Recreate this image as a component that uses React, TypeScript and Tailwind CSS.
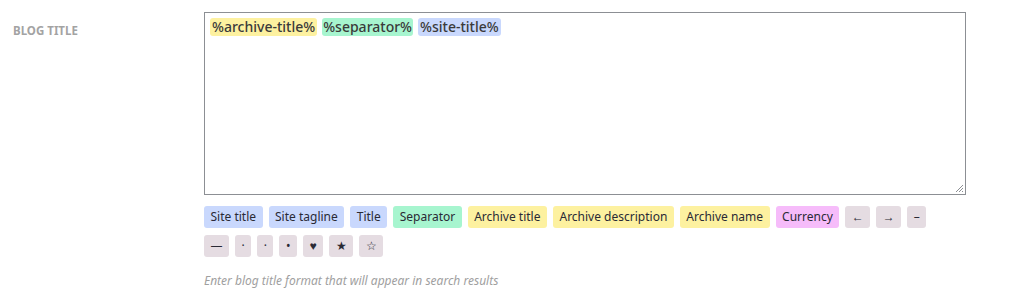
import React from 'react';

type Chip = { label: string; tone: 'blue' | 'green' | 'yellow' | 'pink' | 'gray' };

const chips: Chip[] = [
    { label: 'Site title', tone: 'blue' },
    { label: 'Site tagline', tone: 'blue' },
    { label: 'Title', tone: 'blue' },
    { label: 'Separator', tone: 'green' },
    { label: 'Archive title', tone: 'yellow' },
    { label: 'Archive description', tone: 'yellow' },
    { label: 'Archive name', tone: 'yellow' },
    { label: 'Currency', tone: 'pink' },
    { label: '←', tone: 'gray' },
    { label: '→', tone: 'gray' },
    { label: '–', tone: 'gray' },
    { label: '—', tone: 'gray' },
    { label: '·', tone: 'gray' },
    { label: '·', tone: 'gray' },
    { label: '•', tone: 'gray' },
    { label: '♥', tone: 'gray' },
    { label: '★', tone: 'gray' },
    { label: '☆', tone: 'gray' },
];

const toneClass = {
    blue: 'bg-[#c9d8fd]',
    green: 'bg-[#a7f5cf]',
    yellow: 'bg-[#fdf1a0]',
    pink: 'bg-[#f6bcfa]',
    gray: 'bg-[#e5dce2]',
};

export default function App() {
    return (
        <div className="w-[1024px] h-[301px] bg-white font-['Noto_Sans',sans-serif] text-[#3c434a]">
            <div className="flex pt-3">
                <div className="w-[204px] pl-[13px] pt-[5px]">
                    <span className="text-[11.5px] font-bold text-[#a3a3a3]">BLOG TITLE</span>
                </div>

                <div className="w-[762px]">
                    {/* token input */}
                    <div className="relative h-[183px] border border-[#8c8f94] px-[5px] pt-[5px]">
                        <div className="flex gap-[5px] text-[14px] leading-[18px] font-medium text-[#3a3a3a]">
                            <span className="bg-[#fdf1a0] rounded-[3px] px-[2px]">%archive-title%</span>
                            <span className="bg-[#a7f5cf] rounded-[3px] px-px">%separator%</span>
                            <span className="bg-[#c9d8fd] rounded-[3px] px-[2px]">%site-title%</span>
                        </div>
                        <svg className="absolute right-[1px] bottom-[1px]" width="9" height="9" viewBox="0 0 9 9">
                            <path d="M8 1 L1 8 M8 4 L4 8 M8 7 L7 8" stroke="#8c8f94" strokeWidth="1" />
                        </svg>
                    </div>

                    <div className="mt-[11px] flex flex-wrap gap-x-[6px] gap-y-[7px] w-[735px]">
                        {chips.map((c, i) => (
                            <span
                                key={i}
                                className={`${toneClass[c.tone]} h-[22px] flex items-center justify-center rounded-[3px] px-[6.5px] text-[12px] text-[#2a2a35]`}
                            >
                                {c.label}
                            </span>
                        ))}
                    </div>

                    <p className="mt-[15px] text-[12px] italic text-[#a0a0a0]">
                        Enter blog title format that will appear in search results
                    </p>
                </div>
            </div>
        </div>
    );
}
